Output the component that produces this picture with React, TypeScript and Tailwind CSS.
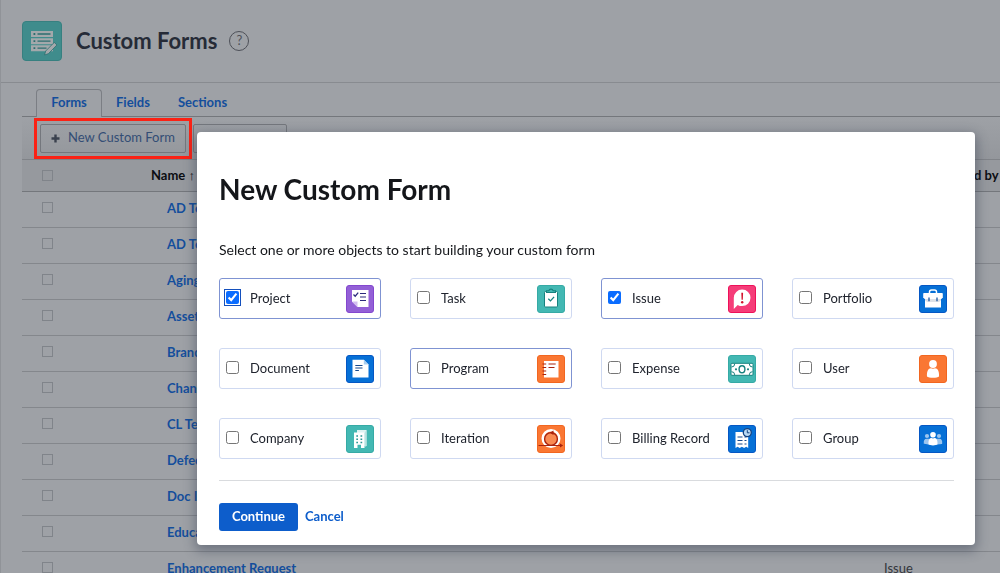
import type { ReactNode } from "react";

type FormObject = { name: string; tile: string; checked?: boolean; highlighted?: boolean; focused?: boolean; icon: ReactNode };

const objects: FormObject[] = [
  {
    name: "Project",
    tile: "bg-[#9360d6] border-[#8347cf]",
    checked: true,
    highlighted: true,
    focused: true,
    icon: (
      <>
        <path d="M6 5h16.500v17H11.500L6 16.500z" fill="#fff" />
        <path d="M6 16.500h5.500V22z" fill="#d3bdf0" />
        <path d="M7.500 9.500l1.700 1.700 3-3.600" fill="none" stroke="#2c2a7c" strokeWidth="1.300" />
        <path d="M14 8.500h6M14 12h6M14 15.500h6" stroke="#2c2a7c" strokeWidth="1.100" />
      </>
    ),
  },
  {
    name: "Task",
    tile: "bg-[#43b8b3] border-[#36aaa5]",
    icon: (
      <>
        <rect x="7.500" y="6.500" width="13" height="15.500" rx="1" fill="#fff" stroke="#16827f" />
        <path d="M9.500 7.500V5.800h2.300a2.300 2.300 0 0 1 4.400 0h2.300v1.700z" fill="#43b8b3" stroke="#16827f" strokeWidth="1.100" />
        <path d="M11.300 13.700l2.200 2.200 3.600-4" fill="none" stroke="#16827f" strokeWidth="1.300" />
      </>
    ),
  },
  {
    name: "Issue",
    tile: "bg-[#f53d79] border-[#ee1159]",
    checked: true,
    highlighted: true,
    icon: (
      <>
        <path d="M14.200 4.500a8.300 8.300 0 0 1 0 16.600c-1.700 0-3.200-.4-4.500-1.200L5.800 24V12.800a8.300 8.300 0 0 1 8.400-8.300z" fill="#fff" />
        <path d="M13.300 7.800h1.800l-.3 7h-1.200z" fill="#d3112c" />
        <circle cx="14.200" cy="17.300" r="1.200" fill="#d3112c" />
      </>
    ),
  },
  {
    name: "Portfolio",
    tile: "bg-[#0670d6] border-[#0557c4]",
    icon: (
      <>
        <path d="M10.500 8V7c0-1.300.8-2 2-2h3c1.200 0 2 .7 2 2v1" fill="none" stroke="#fff" strokeWidth="1.500" />
        <path d="M6 12.500h16V22.500H6z" fill="#fff" />
        <path d="M5 8h18c.5 0 .8.300.8.800v3.700l-1.500 1.500H5.700l-1.500-1.500V8.800c0-.5.300-.8.800-.8z" fill="#fff" />
        <path d="M6 14h16v1.500l-2 1.500H8l-2-1.500z" fill="#dde2e8" />
        <path d="M10 12.500v3.800M18 12.500v3.800" stroke="#0b4b9b" strokeWidth="1.200" />
      </>
    ),
  },
  {
    name: "Document",
    tile: "bg-[#0670d6] border-[#0557c4]",
    icon: (
      <>
        <path d="M6.500 4.700h11.300l4.700 4.700V22.500h-16z" fill="#fff" />
        <path d="M17.800 4.700l4.700 4.700h-4.700z" fill="#a6cdf1" />
        <path d="M9.300 10.500h7.200M9.300 13h7.200M9.300 15.500h3.600" stroke="#16488c" strokeWidth="1.200" />
      </>
    ),
  },
  {
    name: "Program",
    tile: "bg-[#fa7733] border-[#f26620]",
    highlighted: true,
    icon: (
      <>
        <path d="M7 6h14.500v16.500H7z" fill="#fff" />
        <path d="M5.500 9h3.700M5.500 12.500h3.700M5.500 16h3.700M5.500 19.500h3.700M11.500 9H18.700M11.500 12.500h6" stroke="#a8230e" strokeWidth="1.200" />
      </>
    ),
  },
  {
    name: "Expense",
    tile: "bg-[#43b8b3] border-[#36aaa5]",
    icon: (
      <>
        <rect x="3" y="8.300" width="22" height="12" rx="1" fill="#fff" stroke="#16827f" />
        <path d="M3.500 12a3.200 3.200 0 0 0 3.200-3.200M24.500 12a3.200 3.200 0 0 1-3.200-3.200M3.500 16.700a3.200 3.200 0 0 1 3.200 3.200M24.500 16.700a3.200 3.200 0 0 0-3.200 3.200" fill="none" stroke="#16827f" />
        <ellipse cx="14" cy="14.300" rx="2.900" ry="3.500" fill="#fff" stroke="#16827f" strokeWidth="1.400" />
        <circle cx="8" cy="14.300" r="1.100" fill="#16827f" />
        <circle cx="20" cy="14.300" r="1.100" fill="#16827f" />
      </>
    ),
  },
  {
    name: "User",
    tile: "bg-[#fa7733] border-[#f26620]",
    icon: (
      <>
        <circle cx="14" cy="9" r="3.900" fill="#fff" />
        <path d="M8 21.500c-.4-5 1.200-8.200 4-8.200.7.600 3.300.6 4 0 2.800 0 4.400 3.200 4 8.200-1.500 1.700-10.500 1.700-12 0z" fill="#fff" />
      </>
    ),
  },
  {
    name: "Company",
    tile: "bg-[#43b8b3] border-[#36aaa5]",
    icon: (
      <>
        <path d="M11 5h9.500v16H18V8h-7z" fill="#dff3f2" />
        <path d="M8 7.500h10.500V23H15v-3.200h-3.500V23H8z" fill="#fff" />
        <path d="M18.500 8l2-3v16l-2 1z" fill="#b9e4e2" />
        <path
          d="M10.300 10.300h1.700v1.500h-1.700zM14.500 10.300h1.700v1.500h-1.700zM10.300 13.500h1.700V15h-1.700zM14.500 13.500h1.700V15h-1.700zM10.300 16.700h1.700v1.500h-1.700zM14.500 16.700h1.700v1.500h-1.700z"
          fill="#2c9894"
        />
      </>
    ),
  },
  {
    name: "Iteration",
    tile: "bg-[#fa7733] border-[#f26620]",
    icon: (
      <>
        <circle cx="14" cy="13.500" r="8.200" fill="#fa8b52" stroke="#fff" strokeWidth="2.600" />
        <circle cx="14" cy="14" r="6.400" fill="none" stroke="#a8230e" strokeWidth="1.400" />
        <path d="M1.500 20.500h23" stroke="#a8230e" strokeWidth="1.200" />
        <path d="M23 18.500l3.200 2-3.200 2zM16.500 5.500v4.400l-3.900-2.200z" fill="#a8230e" />
      </>
    ),
  },
  {
    name: "Billing Record",
    tile: "bg-[#0670d6] border-[#0557c4]",
    icon: (
      <>
        <path d="M7.500 7h12.700v16l-2-1.300-2.100 1.300-2.200-1.300-2.200 1.300-2.100-1.300-2.100 1.300z" fill="#fff" />
        <path d="M9.500 12h5M16.500 12h2M9.500 15.500h5M16.500 15.500h2M9.500 19h5M16.500 19h2" stroke="#16488c" strokeWidth="1.200" />
        <circle cx="19.300" cy="7.600" r="4" fill="#b8d8f2" stroke="#12407f" strokeWidth="1.300" />
        <path d="M19.300 5.200v2.600h2.200" fill="none" stroke="#12407f" />
      </>
    ),
  },
  {
    name: "Group",
    tile: "bg-[#0670d6] border-[#0557c4]",
    icon: (
      <>
        <g fill="#9cc6ef">
          <circle cx="8" cy="11" r="2.100" />
          <circle cx="20" cy="11" r="2.100" />
          <path d="M4.800 18.700c-.3-3.100.7-4.900 2.800-4.900h12.800c2.100 0 3.100 1.800 2.800 4.900-1 1-17.400 1-18.400 0z" />
        </g>
        <circle cx="14" cy="9.700" r="2.800" fill="#fff" />
        <path d="M9.500 19.300c-.3-4 .9-6.300 3-6.300.6.500 2.400.5 3 0 2.100 0 3.300 2.300 3 6.300-1.200 1.500-7.800 1.500-9 0z" fill="#fff" />
      </>
    ),
  },
];

const forms: { name: string; type?: string }[] = [
  { name: "AD Test" },
  { name: "AD Test 2" },
  { name: "Aging" },
  { name: "Asset" },
  { name: "Brand" },
  { name: "Change" },
  { name: "CL Test" },
  { name: "Defect" },
  { name: "Doc Info" },
  { name: "Education" },
  { name: "Enhancement Request", type: "Issue" },
];

function SelectBox({ label }: { label: string }) {
  return (
    <input
      type="checkbox"
      aria-label={label}
      className="block size-[11px] appearance-none border border-[#80848a]"
    />
  );
}

function FormsIcon() {
  return (
    <svg viewBox="0 0 40 40" className="size-10 shrink-0" aria-hidden="true">
      <rect x="0.500" y="0.500" width="39" height="39" rx="3.500" fill="#3f8c8c" stroke="#378080" />
      <path d="M9 10h22v6H9zM9 17.200h22v6H9zM9 24.300h22v6H9z" fill="#a3a8ab" />
      <path d="M15.500 13h13M15.500 20.200h13M15.500 27.200h9" stroke="#2c6e70" strokeWidth="1.300" />
      <path d="M11.500 13h1.800M11.500 20.200h1.800M11.500 27.200h1.800" stroke="#2c6e70" strokeWidth="1.800" />
      <path d="M22.500 34l1.200-4 8.600-8.600 2.600 2.600-8.500 8.700z" fill="#a3a8ab" stroke="#2c6e70" strokeWidth="0.800" />
    </svg>
  );
}

function ObjectCard({ item }: { item: FormObject }) {
  return (
    <label
      className={`flex h-[41px] items-center rounded-[3px] border pr-1.5 pl-1.5 text-[13px] text-[#20242e] ${
        item.highlighted ? "border-[#7f93d2]" : "border-[#cfd9f1]"
      }`}
    >
      <input
        type="checkbox"
        defaultChecked={item.checked}
        className={`mb-0.5 size-[13px] accent-[#0a6cff] ${item.focused ? "outline-1 outline-offset-1 outline-[#1450bd]" : ""}`}
      />
      <span className="ml-[11px] flex-1">{item.name}</span>
      <span className={`size-7 overflow-hidden rounded-[3px] border ${item.tile}`}>
        <svg viewBox="1 1 26 26" className="size-full" aria-hidden="true">
          {item.icon}
        </svg>
      </span>
    </label>
  );
}

export default function App() {
  return (
    <div className="relative h-screen overflow-hidden border-l border-[#909398] bg-[#9ea1a6] font-['Lato','Liberation_Sans',sans-serif] text-[13px]">
      <header className="flex h-[83px] items-center border-b border-[#888b90] pl-[21px]">
        <FormsIcon />
        <h1 className="ml-[14px] text-[22px] leading-8 font-bold text-[#262b37]">Custom Forms</h1>
        <button
          type="button"
          aria-label="Help"
          className="ml-3 flex size-5 items-center justify-center rounded-full border border-[#4d5058] text-[13px] text-[#4d5058]"
        >
          ?
        </button>
      </header>

      <main className="pt-1.5 pl-[21px]">
        <nav className="flex h-7 items-stretch border-b border-[#74777c] pl-3.5 font-bold">
          <a href="#forms" className="-mb-px flex w-[66px] items-center justify-center rounded-t-[4px] border border-b-0 border-[#7b7e84] bg-[#9ea1a6] pb-0.5 text-[#144e9c]">
            Forms
          </a>
          <a href="#fields" className="ml-3.5 flex items-center text-[#144e9c]">
            Fields
          </a>
          <a href="#sections" className="ml-7 flex items-center text-[#144e9c]">
            Sections
          </a>
        </nav>

        <div className="flex h-[43px] items-center gap-[7px] border-b border-[#808388] bg-linear-to-b from-[#9ea1a6] to-[#94979c] pl-[18px]">
          <div className="outline-[3px] outline-offset-[3px] outline-[#fb2215]">
            <button
              type="button"
              className="flex h-[29px] w-[146px] items-center justify-center gap-2 rounded-[2px] border border-[#74777d] text-[#334d75]"
            >
              <svg viewBox="0 0 9 9" className="size-[9px]" aria-hidden="true">
                <path d="M4.500 0.500v8M0.500 4.500h8" stroke="#3a414e" strokeWidth="2.400" />
              </svg>
              New Custom Form
            </button>
          </div>
          <button type="button" aria-label="More actions" className="h-[29px] w-[94px] rounded-[2px] border border-[#74777d]" />
        </div>

        <table className="w-full table-fixed border-collapse text-left">
          <thead>
            <tr className="h-[31px] border-b border-[#74777c] bg-[#96999e] text-[#0b0d12]">
              <th className="w-[129px] pl-5">
                <SelectBox label="Select all" />
              </th>
              <th className="font-bold">
                Name <span className="font-['Liberation_Sans'] font-normal">↑</span>
              </th>
              <th className="w-[58px]" />
              <th className="w-[58px] pl-8 font-bold whitespace-nowrap">d by</th>
            </tr>
          </thead>
          <tbody>
            {forms.map((form) => (
              <tr key={form.name} className="h-9 border-b border-[#84878c]">
                <td className="pb-1 pl-5">
                  <SelectBox label={`Select ${form.name}`} />
                </td>
                <td className="pl-4">
                  <a href="#form" className="font-bold text-[#144e9c]">
                    {form.name}
                  </a>
                </td>
                <td className="text-[#33363c]">{form.type}</td>
                <td />
              </tr>
            ))}
          </tbody>
        </table>
      </main>

      <div className="fixed inset-0 flex items-start pt-[132px] pr-[25px] pl-[197px]">
        <section
          role="dialog"
          aria-labelledby="dialog-title"
          className="flex-1 rounded-[4px] bg-white pt-10 pr-[21px] pb-3.5 pl-[22px] shadow-[0_4px_12px_2px_rgba(50,60,80,0.45)]"
        >
          <h2 id="dialog-title" className="text-[28px] leading-[34px] font-bold text-[#14161a]">
            New Custom Form
          </h2>
          <p className="mt-[34px] text-[14px] leading-5 text-[#14161a]">
            Select one or more objects to start building your custom form
          </p>
          <div className="mt-[18px] grid grid-cols-4 gap-[29px]">
            {objects.map((item) => (
              <ObjectCard key={item.name} item={item} />
            ))}
          </div>
          <div className="mt-[21px] flex items-center gap-[7px] border-t border-[#d9dbde] pt-[22px] font-bold">
            <button type="button" className="h-7 w-[79px] rounded-[3px] bg-[#0d5dcb] text-white">
              Continue
            </button>
            <button type="button" className="text-[#0d5dcb]">
              Cancel
            </button>
          </div>
        </section>
      </div>
    </div>
  );
}
